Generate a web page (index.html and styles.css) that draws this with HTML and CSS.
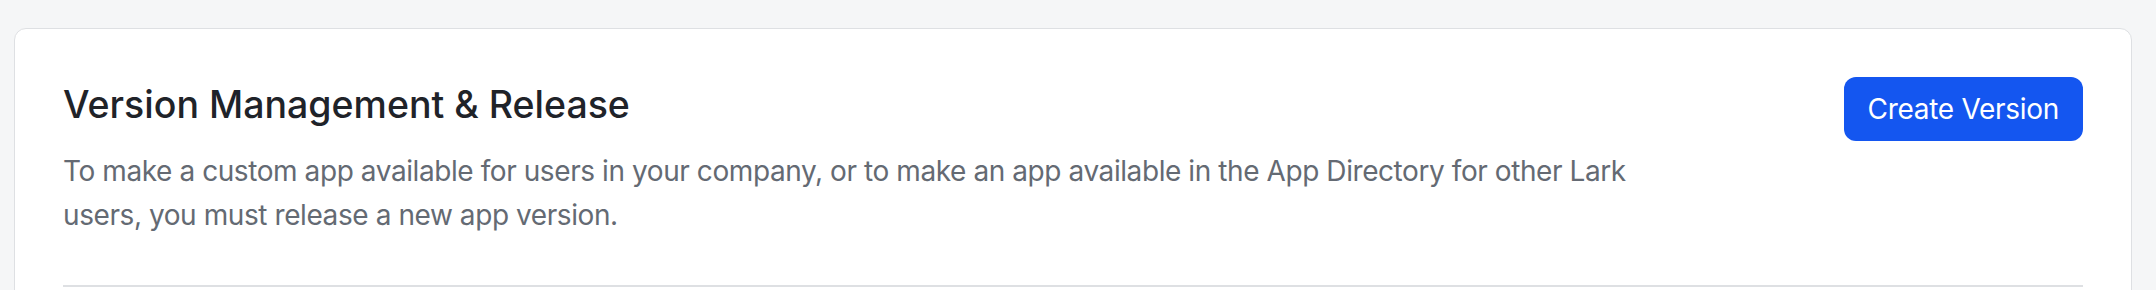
FILE: index.html
```html
<!DOCTYPE html>
<html lang="en">
<head>
  <meta charset="UTF-8" />
  <title>Version Management &amp; Release</title>
  <link rel="stylesheet" href="styles.css">
</head>
<body>
  <div class="card">
    <div class="card-head">
      <div class="intro">
        <h1 class="title">Version Management &amp; Release</h1>
        <p class="desc">To make a custom app available for users in your company, or to make an app available in the App Directory for other Lark users, you must release a new app version.</p>
      </div>
      <button class="btn-primary">Create Version</button>
    </div>
    <div class="divider"></div>
  </div>
</body>
</html>
```
FILE: styles.css
```css
body {
  margin: 0;
  padding: 28px 24px 0 14px;
  background: #f5f6f7;
  font-family: Inter, "Noto Sans", sans-serif;
}

.card {
  background: #fff;
  border: 1px solid #dee0e3;
  border-radius: 12px;
  padding: 48px 48px 0 48px;
  min-height: 400px;
}

.card-head {
  display: flex;
  justify-content: space-between;
  align-items: flex-start;
}

.title {
  margin: 0;
  font-size: 37.5px;
  line-height: 56px;
  font-weight: 500;
  color: #1f2329;
}

.desc {
  margin: 16px 0 0;
  max-width: 1600px;
  font-size: 28px;
  line-height: 44px;
  letter-spacing: -0.42px;
  color: #646a73;
}

.btn-primary {
  flex-shrink: 0;
  height: 64px;
  padding: 0 24px;
  border: none;
  border-radius: 12px;
  background: #1456f0;
  color: #fff;
  font-family: inherit;
  font-size: 28px;
  letter-spacing: -0.3px;
}

.divider {
  height: 2px;
  margin-top: 48px;
  background: #dee0e3;
}
```
